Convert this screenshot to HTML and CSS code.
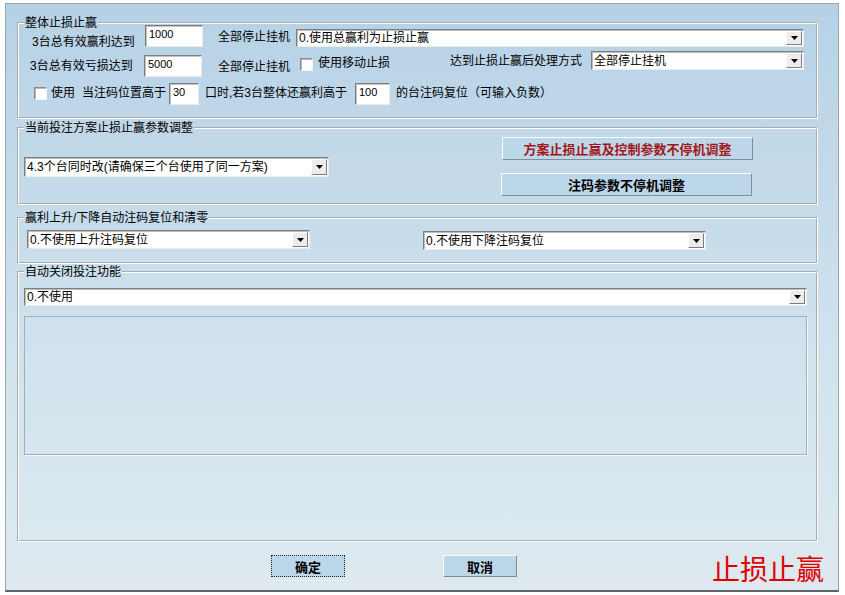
FILE: index.html
```html
<!DOCTYPE html>
<html lang="zh-CN">
<head>
    <meta charset="UTF-8">
    <title>止损止赢</title>
    <link rel="stylesheet" href="styles.css">
</head>
<body>
    <div class="dialog">
        <fieldset class="group g-total">
            <legend>整体止损止赢</legend>
            <div class="group-body">
                <div class="row r1">
                    <span class="lbl l-profit">3台总有效赢利达到</span>
                    <input class="num i-profit" value="1000">
                    <span class="lbl l-stop1">全部停止挂机</span>
                    <div class="combo c-mode"><span>0.使用总赢利为止损止赢</span><i class="drop"><svg width="7" height="4"><path d="M0 0h7L3.5 4z"/></svg></i></div>
                </div>
                <div class="row r2">
                    <span class="lbl l-loss">3台总有效亏损达到</span>
                    <input class="num i-loss" value="5000">
                    <span class="lbl l-stop2">全部停止挂机</span>
                    <span class="check ck-move"></span>
                    <span class="lbl l-move">使用移动止损</span>
                    <span class="lbl l-after">达到止损止赢后处理方式</span>
                    <div class="combo c-after"><span>全部停止挂机</span><i class="drop"><svg width="7" height="4"><path d="M0 0h7L3.5 4z"/></svg></i></div>
                </div>
                <div class="row r3">
                    <span class="check ck-use"></span>
                    <span class="lbl l-use">使用</span>
                    <span class="lbl l-above">当注码位置高于</span>
                    <input class="num i-pos" value="30">
                    <span class="lbl l-when">口时,若3台整体还赢利高于</span>
                    <input class="num i-amt" value="100">
                    <span class="lbl l-reset">的台注码复位（可输入负数）</span>
                </div>
            </div>
        </fieldset>

        <fieldset class="group g-plan">
            <legend>当前投注方案止损止赢参数调整</legend>
            <div class="group-body">
                <div class="row">
                    <div class="combo c-plan"><span>4.3个台同时改(请确保三个台使用了同一方案)</span><i class="drop"><svg width="7" height="4"><path d="M0 0h7L3.5 4z"/></svg></i></div>
                    <div class="plan-btns">
                        <button class="btn btn-red">方案止损止赢及控制参数不停机调整</button>
                        <button class="btn btn-bet">注码参数不停机调整</button>
                    </div>
                </div>
            </div>
        </fieldset>

        <fieldset class="group g-reset">
            <legend>赢利上升/下降自动注码复位和清零</legend>
            <div class="group-body">
                <div class="row">
                    <div class="combo c-up"><span>0.不使用上升注码复位</span><i class="drop"><svg width="7" height="4"><path d="M0 0h7L3.5 4z"/></svg></i></div>
                    <div class="combo c-down"><span>0.不使用下降注码复位</span><i class="drop"><svg width="7" height="4"><path d="M0 0h7L3.5 4z"/></svg></i></div>
                </div>
            </div>
        </fieldset>

        <fieldset class="group g-auto">
            <legend>自动关闭投注功能</legend>
            <div class="group-body">
                <div class="combo c-auto"><span>0.不使用</span><i class="drop"><svg width="7" height="4"><path d="M0 0h7L3.5 4z"/></svg></i></div>
                <div class="log"></div>
            </div>
        </fieldset>

        <div class="actions">
            <button class="btn btn-ok">确定</button>
            <button class="btn btn-cancel">取消</button>
            <span class="brand">止损止赢</span>
        </div>
    </div>
</body>
</html>
```

FILE: styles.css
```css
body {
    margin: 0;
    background: #fff;
    font-family: "Liberation Sans", "Noto Sans CJK SC", sans-serif;
    font-size: 12px;
    color: #000;
}
.dialog {
    width: 834px;
    height: 589px;
    margin: 3px 0 0 5px;
    box-sizing: border-box;
    padding: 12px 0 0 11px;
    border: 1px solid #9ca6ad;
    border-bottom: 2px solid #5f6468;
    background: linear-gradient(#b6d1e6 0%, #c4daea 30%, #d3e4ee 65%, #dde9ef 100%);
}

/* group boxes */
.group {
    width: 801px;
    box-sizing: border-box;
    margin: 0;
    padding: 0;
    min-width: 0;
    border: 2px groove #fff;
}
.group legend {
    margin-left: 5px;
    padding: 0 1px;
    font-size: 12px;
    line-height: 14px;
}
.group-body {
    display: flow-root;
}
.g-total .group-body { height: 87px; }
.g-plan { margin-top: 2px; }
.g-plan .group-body { height: 68px; }
.g-reset { margin-top: 6px; }
.g-reset .group-body { height: 37px; }
.g-auto { margin-top: 1px; }
.g-auto .group-body { height: 261px; }

.row {
    display: flex;
    align-items: flex-start;
}
.lbl {
    flex: none;
    font-size: 12px;
    line-height: 14px;
    white-space: nowrap;
}

/* inputs */
.num {
    flex: none;
    box-sizing: border-box;
    height: 22px;
    padding: 2px 0 7px 3px;
    margin: 0;
    border: 1px solid;
    border-color: #7b7b7b #ebebeb #ebebeb #7b7b7b;
    box-shadow: inset 1px 1px 0 #c4c4c4;
    background: #fff;
    font-family: "Liberation Sans", sans-serif;
    font-size: 11px;
    outline: none;
}
.check {
    flex: none;
    width: 13px;
    height: 13px;
    box-sizing: border-box;
    background: #fff;
    border: 1px solid;
    border-color: #8a8a8a #f4f4f4 #f4f4f4 #8a8a8a;
    box-shadow: inset 1px 1px 0 #b8b8b8;
}

/* combo boxes */
.combo {
    flex: none;
    display: flex;
    align-items: center;
    box-sizing: border-box;
    padding-left: 2px;
    background: #fff;
    border: 1px solid;
    border-color: #7e7e7e #ececec #ececec #7e7e7e;
    box-shadow: inset 1px 1px 0 #bdbdbd;
    font-size: 12px;
    white-space: nowrap;
    overflow: hidden;
}
.combo span {
    line-height: 14px;
}
.drop {
    display: flex;
    align-items: center;
    justify-content: center;
    margin: 0 1px 0 auto;
    width: 16px;
    height: calc(100% - 2px);
    box-sizing: border-box;
    background: #ececec;
    border: 1px solid;
    border-color: #fff #7d7d7d #7d7d7d #fff;
}
.drop svg { fill: #000; }

/* row 1 */
.r1 { margin-top: -5px; height: 22px; }
.l-profit { margin: 10px 0 0 13px; width: 103px; }
.i-profit { margin-left: 10px; width: 58px; }
.l-stop1 { margin: 5px 0 0 15px; width: 72px; }
.c-mode { margin: 4px 0 0 6px; width: 508px; height: 18px; }

/* row 2 */
.r2 { margin-top: 4px; height: 26px; }
.l-loss { margin: 8px 0 0 11px; width: 103px; }
.i-loss { margin: 4px 0 0 11px; width: 58px; }
.l-stop2 { margin: 9px 0 0 16px; width: 72px; }
.ck-move { margin: 7px 0 0 10px; }
.l-move { margin: 5px 0 0 5px; width: 72px; }
.l-after { margin: 3px 0 0 60px; width: 132px; }
.c-after { margin-left: 9px; width: 213px; height: 19px; }

/* row 3 */
.r3 { margin-top: 6px; height: 22px; }
.ck-use { margin: 4px 0 0 15px; }
.l-use { margin: 3px 0 0 4px; width: 24px; }
.l-above { margin: 3px 0 0 7px; width: 84px; }
.i-pos { margin-left: 3px; width: 30px; }
.l-when { margin: 3px 0 0 6px; width: 144px; }
.i-amt { margin-left: 6px; width: 35px; }
.l-reset { margin: 3px 0 0 6px; }

/* plan group */
.c-plan { margin: 22px 0 0 5px; width: 305px; height: 20px; }
.plan-btns {
    display: flex;
    flex-direction: column;
    margin: 2px 0 0 173px;
}
.btn {
    box-sizing: border-box;
    padding: 0;
    background: #bcd6ea;
    border: 1px solid;
    border-color: #fbfdff #7f8e9a #7f8e9a #fbfdff;
    font-family: "Noto Sans CJK SC", sans-serif;
    font-size: 13px;
    font-weight: bold;
    color: #000;
    cursor: pointer;
}
.btn-red { width: 251px; height: 23px; color: #a31818; }
.btn-bet { width: 251px; height: 23px; margin: 13px 0 0 -1px; }

/* reset group */
.c-up { margin: 5px 0 0 8px; width: 283px; height: 19px; }
.c-down { margin: 6px 0 0 113px; width: 283px; height: 19px; }

/* auto close group */
.c-auto { margin: 9px 0 0 5px; width: 783px; height: 18px; }
.log {
    margin: 10px 0 0 5px;
    width: 783px;
    height: 139px;
    box-sizing: border-box;
    border: 1px solid #a3aeb6;
    box-shadow: 1px 1px 0 #f6f9fb;
}

/* bottom buttons */
.actions {
    display: flex;
    align-items: flex-start;
    margin-top: 13px;
}
.btn-ok {
    margin-left: 254px;
    width: 74px;
    height: 22px;
    border: 1px dotted #222;
}
.btn-cancel {
    margin-left: 98px;
    width: 74px;
    height: 22px;
}
.brand {
    margin: -1px 0 0 195px;
    font-family: "Noto Sans CJK SC", sans-serif;
    font-size: 28px;
    line-height: 28px;
    color: #e00000;
}
```
